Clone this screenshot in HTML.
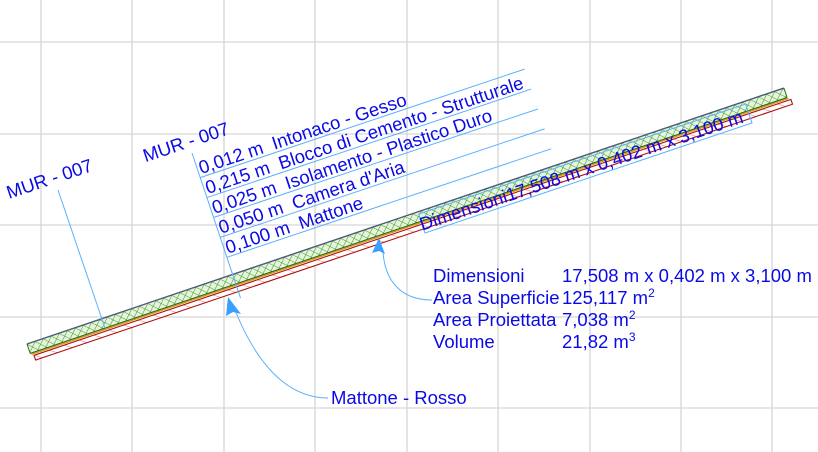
<!DOCTYPE html>
<html><head><meta charset="utf-8"><style>
html,body{margin:0;padding:0;background:#fff;}
svg{display:block;}
text{font-family:"Liberation Sans",Arial,sans-serif;fill:#0a0ae6;font-size:18.5px;}
</style></head><body>
<svg width="818" height="452" viewBox="0 0 818 452" xmlns="http://www.w3.org/2000/svg">
<defs>
<pattern id="gx" width="6" height="6" patternUnits="userSpaceOnUse" patternTransform="rotate(45)">
<rect width="6" height="6" fill="#e6f4dc"/>
<path d="M0 0H6M0 0V6" stroke="#3f9a2a" stroke-width="1.1"/>
</pattern>
<pattern id="rx" width="9" height="9" patternUnits="userSpaceOnUse" patternTransform="rotate(-55)">
<rect width="9" height="9" fill="#fff"/>
<path d="M0 0V9" stroke="#f07070" stroke-width="1"/>
</pattern>
</defs>
<g stroke="#d6d6d6" stroke-width="1.3">
<path d="M41 0V452M132 0V452M224 0V452M315 0V452M407 0V452M498 0V452M590 0V452M681 0V452M772 0V452"/>
<path d="M0 42H818M0 134H818M0 225H818M0 317H818M0 408H818"/>
</g>
<!-- wall -->
<g transform="translate(27,344) rotate(-18.68)">
<rect x="0" y="0" width="799" height="10" fill="url(#gx)"/>
<path d="M0 0H799" stroke="#4a5a78" stroke-width="1.4"/>
<path d="M0 10H799" stroke="#2d6a1e" stroke-width="1.2"/>
<path d="M0 0V10M799 0V10" stroke="#2d6a1e" stroke-width="1"/>
<path d="M1 11.3H800" stroke="#d89a10" stroke-width="1.3"/>
<rect x="3" y="13" width="799" height="5" fill="url(#rx)" stroke="#b01010" stroke-width="1.1"/>
</g>
<!-- leaders -->
<g stroke="#5ab0ff" stroke-width="1" fill="none">
<path d="M58 190L105 328"/>
<path d="M235 310C255 360 285 398 328 398"/>
<path d="M383 252C385 280 400 300 432 300"/>
</g>
<path d="M228 297L241 314L233 312L226 316Z" fill="#3aa0ff"/>
<path d="M379 238L385 254L379 251L372 253Z" fill="#3aa0ff"/>
<!-- left label -->
<text transform="translate(9,199) rotate(-18.5)">MUR - 007</text>
<!-- table -->
<g transform="translate(192,153) rotate(-18.5)">
<g stroke="#5ab0ff" stroke-width="1" fill="none">
<path d="M0 0V153"/>
<path d="M0 26H342M0 47H342M0 68H342M0 89H342M0 110H342"/>
</g>
<text x="-47" y="-6">MUR - 007</text>
<text x="2" y="23" xml:space="preserve">0,012 m  Intonaco - Gesso</text>
<text x="2" y="44" xml:space="preserve">0,215 m  Blocco di Cemento - Strutturale</text>
<text x="2" y="65" xml:space="preserve">0,025 m  Isolamento - Plastico Duro</text>
<text x="2" y="86" xml:space="preserve">0,050 m  Camera d'Aria</text>
<text x="2" y="107" xml:space="preserve">0,100 m  Mattone</text>
</g>
<!-- dimension label along wall -->
<g transform="translate(425,233) rotate(-18.6)">
<rect x="0" y="-20" width="345" height="20" fill="none" stroke="#5ab0ff" stroke-width="1"/>
<text x="-2" y="-3" textLength="340" lengthAdjust="spacingAndGlyphs">Dimensioni17,508 m x 0,402 m x 3,100 m</text>
</g>
<text x="331" y="404">Mattone - Rosso</text>
<text x="433" y="282">Dimensioni</text>
<text x="562" y="282">17,508 m x 0,402 m x 3,100 m</text>
<text x="433" y="304">Area Superficie</text>
<text x="562" y="304">125,117 m<tspan font-size="12" dy="-7">2</tspan></text>
<text x="433" y="326">Area Proiettata</text>
<text x="562" y="326">7,038 m<tspan font-size="12" dy="-7">2</tspan></text>
<text x="433" y="348">Volume</text>
<text x="562" y="348">21,82 m<tspan font-size="12" dy="-7">3</tspan></text>
</svg>
</body></html>
